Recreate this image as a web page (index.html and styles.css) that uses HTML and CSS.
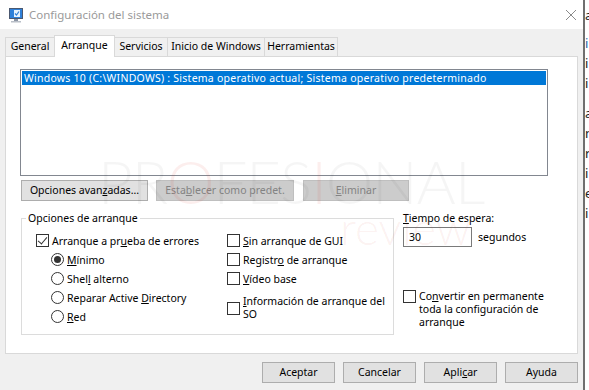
FILE: index.html
```html
<!DOCTYPE html>
<html>
    <head>
        <meta charset="UTF-8">
        <title>Configuración del sistema</title>
        <link rel="stylesheet" href="styles.css">
    </head>
    <body>
        <div class="screen">
            <div class="window">
                <div class="titlebar">
                    <svg class="icon" viewBox="0 0 16 16">
                        <rect x="1" y="1" width="14" height="11" fill="#4a5870"/>
                        <rect x="2" y="2" width="12" height="9" fill="#2f80d8"/>
                        <rect x="6" y="3" width="6" height="7" fill="#e8f3fd"/>
                        <path d="M7 6.5 L8.5 8 L11 4.5" stroke="#2f80d8" stroke-width="1.2" fill="none"/>
                        <rect x="6" y="12" width="4" height="2" fill="#8b94a3"/>
                        <rect x="3" y="14" width="10" height="1.5" fill="#b9bfc8"/>
                    </svg>
                    <span class="title">Configuración del sistema</span>
                    <svg class="close" viewBox="0 0 10 10">
                        <path d="M0 0 L10 10 M10 0 L0 10" stroke="#8a8a8a" stroke-width="1" fill="none"/>
                    </svg>
                </div>

                <div class="client">
                    <div class="tabs">
                        <div class="tab t-gen">General</div>
                        <div class="tab on t-arr">Arranque</div>
                        <div class="tab t-ser">Servicios</div>
                        <div class="tab t-ini">Inicio de Windows</div>
                        <div class="tab t-her">Herramientas</div>
                    </div>

                    <div class="panel">
                        <div class="listbox">
                            <div class="item sel">Windows 10 (C:\WINDOWS) : Sistema operativo actual; Sistema operativo predeterminado</div>
                        </div>

                        <div class="actions">
                            <div class="btn w-adv">Opciones avan<u>z</u>adas...</div>
                            <div class="btn off w-def">Esta<u>b</u>lecer como predet.</div>
                            <div class="btn off w-del"><u>E</u>liminar</div>
                        </div>

                        <div class="options">
                            <fieldset class="group">
                                <legend>Opciones de arranque</legend>
                                <div class="cols">
                                    <div class="col">
                                        <div class="opt"><span class="check on"></span><span>Arranque a pr<u>u</u>eba de errores</span></div>
                                        <div class="opt sub"><span class="radio on"></span><span><u>M</u>ínimo</span></div>
                                        <div class="opt sub"><span class="radio"></span><span>Shel<u>l</u> alterno</span></div>
                                        <div class="opt sub"><span class="radio"></span><span>Reparar Active <u>D</u>irectory</span></div>
                                        <div class="opt sub"><span class="radio"></span><span><u>R</u>ed</span></div>
                                    </div>
                                    <div class="col">
                                        <div class="opt"><span class="check"></span><span><u>S</u>in arranque de GUI</span></div>
                                        <div class="opt"><span class="check"></span><span>Registr<u>o</u> de arranque</span></div>
                                        <div class="opt"><span class="check"></span><span><u>V</u>ídeo base</span></div>
                                        <div class="opt two"><span class="check"></span><span class="txt"><u>I</u>nformación de arranque del SO</span></div>
                                    </div>
                                </div>
                            </fieldset>

                            <div class="side">
                                <div class="label"><u>T</u>iempo de espera:</div>
                                <div class="timeout">
                                    <div class="field">30</div>
                                    <span>segundos</span>
                                </div>
                                <div class="opt top"><span class="check"></span><span class="txt wide">Co<u>n</u>vertir en permanente toda la configuración de arranque</span></div>
                            </div>
                        </div>

                        <div class="watermark">
                            <div class="mark-big">PR<span class="red">O</span>FES<span class="red">I</span>ONAL</div>
                            <div class="mark-small">review</div>
                        </div>
                    </div>

                    <div class="footer">
                        <div class="btn">Aceptar</div>
                        <div class="btn">Cancelar</div>
                        <div class="btn">Apli<u>c</u>ar</div>
                        <div class="btn">Ayuda</div>
                    </div>
                </div>
            </div>

            <div class="edge">
                <div class="frag f1">a</div>
                <div class="frag f2"><span class="blue">i</span><br>i<br>i</div>
                <div class="frag f3">a<br>n<br>r<br>i<br>e<br>i</div>
            </div>
        </div>
    </body>
</html>
```

FILE: styles.css
```css
*{ margin:0; padding:0; box-sizing:border-box; }
body{
    width:589px;
    height:390px;
    overflow:hidden;
    background:#fff;
    color:#000;
    font-family:"Noto Sans","Liberation Sans",sans-serif;
    font-size:10.5px;
}
u{ text-decoration:underline; text-underline-offset:1px; }

.screen{ display:flex; height:390px; }
.window{
    width:583px;
    display:flex;
    flex-direction:column;
    background:#f0f0f0;
}

/* barra de titulo */
.titlebar{
    height:29px;
    background:#fff;
    display:flex;
    align-items:center;
    padding:0 7px 0 8px;
}
.titlebar .icon{ width:16px; height:16px; }
.titlebar .title{
    flex:1;
    margin-left:5px;
    font-size:11.5px;
    color:#9a9a9a;
}
.titlebar .close{ width:10px; height:10px; }

.client{ flex:1; padding:6px 5px 0 5px; }

/* pestañas */
.tabs{
    display:flex;
    align-items:flex-end;
    height:21px;
}
.tab{
    height:19px;
    line-height:17px;
    text-align:center;
    white-space:nowrap;
    border:1px solid #d9d9d9;
    border-bottom:none;
    margin-left:-1px;
    background:#f0f0f0;
}
.tab:first-child{ margin-left:0; }
.tab.on{
    position:relative;
    z-index:1;
    height:22px;
    margin-bottom:-1px;
    line-height:18px;
    background:#fff;
}
.t-gen{ width:50px; }
.t-arr{ width:61px; }
.t-ser{ width:54px; }
.t-ini{ width:98px; }
.t-her{ width:74px; }

.panel{
    position:relative;
    height:298px;
    padding:12px 0 0 14px;
    background:#fff;
    border:1px solid #d9d9d9;
    overflow:hidden;
}

/* marca de agua, por encima de todo pero casi transparente */
.watermark{
    position:absolute;
    z-index:2;
    left:92px;
    top:94px;
    pointer-events:none;
    font-family:Lato,"Liberation Sans",sans-serif;
    font-weight:300;
}
.mark-big{
    font-size:60px;
    line-height:60px;
    letter-spacing:-1px;
    color:rgba(0,0,0,.04);
}
.mark-big .red{ color:rgba(220,70,50,.09); }
.mark-small{
    margin:-8px 0 0 242px;
    font-size:46px;
    line-height:50px;
    color:rgba(220,70,50,.08);
}

/* lista de sistemas */
.listbox{
    width:528px;
    height:107px;
    padding:1px;
    border:1px solid #828790;
}
.item{ height:14px; line-height:14px; padding-left:2px; white-space:nowrap; }
.item.sel{ background:#0078d7; color:#fff; letter-spacing:.25px; }

/* botones */
.btn{
    height:21px;
    line-height:19px;
    text-align:center;
    white-space:nowrap;
    background:#e1e1e1;
    border:1px solid #adadad;
}
.btn.off{ background:#cccccc; border-color:#bfbfbf; color:#838383; }

.actions{
    display:flex;
    margin:4px 0 0 1px;
}
.w-adv{ width:127px; }
.w-def{ width:138px; margin-left:8px; }
.w-del{ width:106px; margin-left:9px; }

.options{
    display:flex;
    align-items:flex-start;
    margin-top:10px;
}

.group{
    width:371px;
    height:124px;
    margin-left:1px;
    border:1px solid #dcdcdc;
    padding:0;
}
.group legend{
    margin-left:4px;
    padding:0 2px;
    line-height:14px;
}
.cols{
    display:flex;
    padding:6px 0 0 14px;
}
.col{ display:flex; flex-direction:column; }
.col:first-child{ width:191px; }

.opt{
    display:flex;
    align-items:center;
    height:19px;
    white-space:nowrap;
}
.opt.sub{ padding-left:15px; }
.opt.two{ height:auto; margin-top:7px; }
.opt.top{ align-items:flex-start; height:auto; }
.opt .txt{ white-space:normal; line-height:13px; width:150px; }
.opt .txt.wide{ width:128px; }

.check, .radio{
    flex:none;
    width:13px;
    height:13px;
    margin-right:3px;
    border:1px solid #333;
    background:#fff;
}
.check.on{ position:relative; }
.check.on::after{
    content:"";
    position:absolute;
    left:3px;
    top:0;
    width:4px;
    height:8px;
    border:solid #333;
    border-width:0 1px 1px 0;
    transform:rotate(40deg);
}
.radio{ border-radius:50%; position:relative; }
.radio.on::after{
    content:"";
    position:absolute;
    left:2px;
    top:2px;
    width:7px;
    height:7px;
    border-radius:50%;
    background:#333;
}
.opt.top .check{ margin-top:0; }

.side{ margin-left:9px; }
.side .label{ line-height:14px; }
.timeout{
    display:flex;
    align-items:center;
    margin-top:2px;
}
.field{
    width:69px;
    height:20px;
    line-height:18px;
    padding-left:5px;
    border:1px solid #7a7a7a;
    background:#fff;
}
.timeout span{ margin-left:6px; }
.side .opt.top{ margin-top:43px; }

/* botones inferiores */
.footer{
    display:flex;
    justify-content:flex-end;
    gap:8px;
    margin-top:8px;
}
.footer .btn{ width:73px; }

/* borde de la ventana y lo que hay detras */
.edge{
    flex:1;
    border-left:2px solid #6f6f6f;
    background:#fff;
    overflow:hidden;
    font-size:13px;
    line-height:20px;
    color:#222;
}
.f1{ margin-top:5px; }
.f2{ margin-top:8px; }
.f3{ margin-top:10px; }
.blue{ color:#1f5fa8; }
```
